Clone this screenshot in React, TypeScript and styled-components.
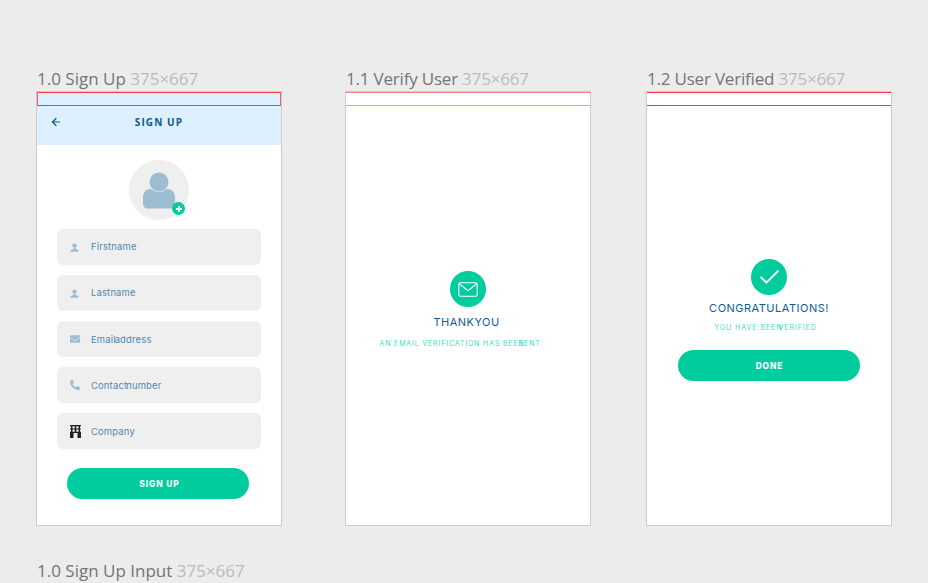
import React from "react";
import styled, { createGlobalStyle } from "styled-components";
import { ArrowLeft, Check } from "lucide-react";
import { FaEnvelope, FaPhoneAlt } from "react-icons/fa";

const GlobalStyle = createGlobalStyle`
  html, body {
    margin: 0;
    padding: 0;
    height: 583px;
    overflow: hidden;
    background: #ececec;
  }
`;

const Canvas = styled.div`
  width: 928px;
  height: 583px;
  overflow: hidden;
  padding: 69px 0 0 36px;
  box-sizing: border-box;
  background: #ececec;
  font-family: "Inter", "Liberation Sans", sans-serif;
`;

const Row = styled.div`
  display: flex;
  align-items: flex-start;
`;

const Artboard = styled.div<{ $gap?: number }>`
  width: 246px;
  margin-right: ${(p) => p.$gap ?? 0}px;
`;

const Label = styled.div<{ $tight?: number }>`
  height: 22px;
  line-height: 20px;
  padding-left: 1px;
  font-family: "Open Sans", "Liberation Sans", sans-serif;
  font-size: 17px;
  letter-spacing: ${(p) => p.$tight ?? 0}px;
  color: #757575;
  white-space: nowrap;

  span {
    color: #bbbbbb;
  }
`;

const BottomLabel = styled(Label)`
  margin-top: 35px;
`;

const Frame = styled.div`
  position: relative;
  height: 435px;
  box-sizing: border-box;
  border: 1px solid #cccccc;
  background: #ffffff;
`;

const StatusGuide = styled.div<{ $strong?: boolean }>`
  position: absolute;
  z-index: 1;
  top: 0;
  left: 0;
  right: 0;
  height: 14px;
  box-sizing: border-box;
  border-top: 1px solid ${(p) => (p.$strong ? "#ff3b45" : "#fb7f84")};
  border-bottom: 1px solid ${(p) => (p.$strong ? "#ff3b45" : "#fb9296")};
`;

const BoxGuide = styled(StatusGuide)`
  border-left: 1px solid #f4606a;
  border-right: 1px solid #f4606a;
`;

const Header = styled.div`
  position: relative;
  height: 53px;
  box-sizing: border-box;
  padding-top: 7px;
  background: #dcf0ff;
  display: flex;
  align-items: center;
  justify-content: center;
  color: #0c5a8e;
`;

const BackIcon = styled(ArrowLeft)`
  position: absolute;
  left: 13px;
  top: 24px;
  width: 12px;
  height: 12px;
`;

const HeaderTitle = styled.div`
  font-family: "Open Sans", "Liberation Sans", sans-serif;
  font-size: 10px;
  font-weight: 700;
  letter-spacing: 1.1px;
`;

const Body = styled.div`
  display: flex;
  flex-direction: column;
  align-items: center;
`;

const AvatarCircle = styled.div`
  position: relative;
  width: 60px;
  height: 60px;
  margin: 15px 0 9px;
  border-radius: 50%;
  background: #efefef;
  display: flex;
  align-items: center;
  justify-content: center;
`;

const PlusBadge = styled.div`
  position: absolute;
  right: 4px;
  bottom: 5px;
  width: 13px;
  height: 13px;
  border-radius: 50%;
  background: #00cc9e;
  display: flex;
  align-items: center;
  justify-content: center;
`;

const Fields = styled.div`
  display: flex;
  flex-direction: column;
  gap: 10px;
`;

const Field = styled.div`
  width: 204px;
  height: 36px;
  box-sizing: border-box;
  padding-left: 13px;
  border-radius: 6px;
  background: #efefef;
  display: flex;
  align-items: center;
  color: #9dbdd3;
`;

const FieldIcon = styled.div`
  width: 21px;
  display: flex;
  align-items: center;
`;

const FieldText = styled.div<{ $lift?: boolean }>`
  padding-bottom: ${(p) => (p.$lift ? 2 : 0)}px;
  font-size: 9.4px;
  color: #4e88ad;
  white-space: nowrap;
  letter-spacing: 0.2px;
`;

const Overlap = styled.span<{ $by: number }>`
  margin-left: -${(p) => p.$by}px;
`;

const PrimaryButton = styled.button<{ $top: number; $nudge?: number }>`
  width: 182px;
  height: 31px;
  margin-top: ${(p) => p.$top}px;
  margin-right: ${(p) => p.$nudge ?? 0}px;
  border: 0;
  padding: 0 0 0 ${(p) => (p.$nudge ? 3 : 1)}px;
  border-radius: 16px;
  background: #00cc9e;
  color: #ffffff;
  font-family: "Inter", "Liberation Sans", sans-serif;
  font-size: 8.4px;
  font-weight: 800;
  letter-spacing: 0.9px;
`;

const Message = styled.div<{ $top: number }>`
  padding-top: ${(p) => p.$top}px;
  display: flex;
  flex-direction: column;
  align-items: center;
`;

const RoundIcon = styled.div`
  width: 36px;
  height: 36px;
  border-radius: 50%;
  background: #00cc9e;
  color: #ffffff;
  display: flex;
  align-items: center;
  justify-content: center;
`;

const Heading = styled.div<{ $top: number; $shift?: number }>`
  margin-top: ${(p) => p.$top}px;
  margin-right: ${(p) => p.$shift ?? 0}px;
  height: 14px;
  line-height: 14px;
  font-size: 11px;
  letter-spacing: 0.5px;
  color: #0f5d8f;
  white-space: nowrap;
`;

const SubText = styled.div<{ $top: number; $shift?: number; $spacing: number }>`
  margin-top: ${(p) => p.$top}px;
  margin-right: ${(p) => p.$shift ?? 0}px;
  height: 10px;
  line-height: 10px;
  font-size: 7px;
  letter-spacing: ${(p) => p.$spacing}px;
  color: #45dcbd;
  white-space: nowrap;
`;

const PersonGlyph = () => (
  <svg width="36" height="38" viewBox="0 0 36 38" fill="#9dbdd3">
    <circle cx="18" cy="11" r="9.5" />
    <path d="M7 37.500c-3 0-5-2-5-5v-6c0-5 3-8.500 7-8.500h1.500c2 2 4.800 3 7.500 3s5.500-1 7.500-3H27c4 0 7 3.500 7 8.500v11z" />
  </svg>
);

const SmallPerson = () => (
  <svg width="9" height="9" viewBox="0 0 9 9" fill="#9dbdd3">
    <circle cx="4.500" cy="2.600" r="2.200" />
    <path d="M3.400 4.800h2.200v1.300l2.800 1v1.600H.6V7.100l2.800-1z" />
  </svg>
);

const CompanyGlyph = () => (
  <svg width="11" height="13" viewBox="0 0 11 13" fill="#222222">
    <path d="M0 0h11v1.300H0zM1 1.300h1.500v3H1zM4.700 1.300h1.600v3H4.700zM8.500 1.300H10v3H8.500z" />
    <path d="M0 3.600h11v1H0zM1 4.600h1.500v2.500H1zM4.700 4.600h1.600v2.500H4.700zM8.500 4.600H10v2.500H8.500z" />
    <path d="M0 6.800h11v1.200H0zM0 8h3.500v5H0zM7.500 8H11v5H7.500z" />
  </svg>
);

const EnvelopeGlyph = () => (
  <svg width="20" height="15" viewBox="0 0 20 15" fill="none" stroke="#ffffff" strokeWidth="1.100">
    <rect x="0.800" y="0.800" width="18.400" height="13.400" rx="1.500" />
    <path d="M1.200 1.800L10 8.800l8.800-7" />
  </svg>
);

const App: React.FC = () => {
  return (
    <Canvas>
      <GlobalStyle />
      <Row>
        <Artboard $gap={63}>
          <Label>
            1.0 Sign Up <span>375×667</span>
          </Label>
          <Frame>
            <BoxGuide $strong />
            <Header>
              <BackIcon strokeWidth={2.4} />
              <HeaderTitle>SIGN UP</HeaderTitle>
            </Header>
            <Body>
              <AvatarCircle>
                <PersonGlyph />
                <PlusBadge>
                  <svg width="8" height="8" viewBox="0 0 8 8" fill="#ffffff">
                    <path d="M3 1h2v2h2v2H5v2H3V5H1V3h2z" />
                  </svg>
                </PlusBadge>
              </AvatarCircle>
              <Fields>
                <Field>
                  <FieldIcon><SmallPerson /></FieldIcon>
                  <FieldText $lift>Firstname</FieldText>
                </Field>
                <Field>
                  <FieldIcon><SmallPerson /></FieldIcon>
                  <FieldText $lift>Lastname</FieldText>
                </Field>
                <Field>
                  <FieldIcon><FaEnvelope size={10} /></FieldIcon>
                  <FieldText>Email<Overlap $by={1}>address</Overlap></FieldText>
                </Field>
                <Field>
                  <FieldIcon><FaPhoneAlt size={10} /></FieldIcon>
                  <FieldText>Contact<Overlap $by={1}>number</Overlap></FieldText>
                </Field>
                <Field>
                  <FieldIcon><CompanyGlyph /></FieldIcon>
                  <FieldText>Company</FieldText>
                </Field>
              </Fields>
              <PrimaryButton $top={19} $nudge={2}>SIGN UP</PrimaryButton>
            </Body>
          </Frame>
        </Artboard>

        <Artboard $gap={55}>
          <Label $tight={-0.2}>
            1.1 Verify User <span>375×667</span>
          </Label>
          <Frame>
            <StatusGuide />
            <Message $top={179}>
              <RoundIcon><EnvelopeGlyph /></RoundIcon>
              <Heading $top={8} $shift={3}>THANKYOU</Heading>
              <SubText $top={10} $shift={16} $spacing={0.85}>
                AN EMAIL VERIFICATION HAS BEEN<Overlap $by={6}>SENT</Overlap>
              </SubText>
            </Message>
          </Frame>
        </Artboard>

        <Artboard>
          <Label $tight={-0.2}>
            1.2 User Verified <span>375×667</span>
          </Label>
          <Frame>
            <StatusGuide $strong />
            <Message $top={167}>
              <RoundIcon><Check size={25} strokeWidth={1.8} /></RoundIcon>
              <Heading $top={6}>CONGRATULATIONS!</Heading>
              <SubText $top={8} $shift={7} $spacing={0.95}>
                YOU HAVE BEEN<Overlap $by={4}>VERIFIED</Overlap>
              </SubText>
              <PrimaryButton $top={17}>DONE</PrimaryButton>
            </Message>
          </Frame>
        </Artboard>
      </Row>
      <BottomLabel>
        1.0 Sign Up Input <span>375×667</span>
      </BottomLabel>
    </Canvas>
  );
};

export default App;
